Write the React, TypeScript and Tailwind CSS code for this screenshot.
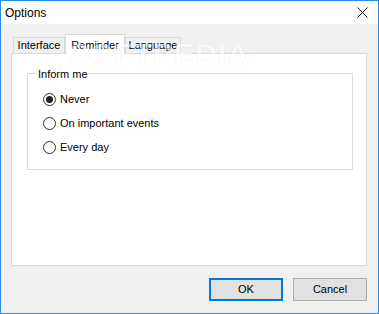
import React from "react";

const font = "font-['Liberation_Sans',Arial,sans-serif]";

function Radio({ label, checked }: { label: string; checked?: boolean }) {
  return (
    <div className="flex h-[24px] items-center">
      <span className="flex h-[13px] w-[13px] items-center justify-center rounded-full border border-[#333333] bg-white">
        {checked && <span className="h-[7px] w-[7px] rounded-full bg-[#222222]" />}
      </span>
      <span className="ml-[4px] text-[11px] text-black">{label}</span>
    </div>
  );
}

export default function App() {
  const tabs = [
    { name: "Interface", w: "w-[52px]" },
    { name: "Reminder", w: "w-[60px]", active: true },
    { name: "Language", w: "w-[56px]" },
  ];

  return (
    <div className={`${font} flex h-[314px] w-[379px] flex-col border border-[#2b8be8] bg-[#f0f0f0]`}>
      {/* title bar */}
      <div className="flex h-[23px] shrink-0 items-center justify-between bg-white pl-[4px] pr-[10px]">
        <span className="text-[12px] text-black">Options</span>
        <svg width="11" height="11" viewBox="0 0 11 11">
          <path d="M0.5 0.5 L10.5 10.5 M10.5 0.5 L0.5 10.5" stroke="#111" strokeWidth="1" fill="none" />
        </svg>
      </div>

      <div className="relative flex flex-1 flex-col pl-[10px] pr-[11px] pt-[10px]">
        <div className="pointer-events-none absolute left-[68px] top-[13px] z-20 text-[30px] font-bold leading-[34px] tracking-[1px] text-white opacity-50 [text-shadow:0_0_1px_rgba(0,0,0,0.2)]">
          SOFTPEDIA<span className="align-top text-[9px]">®</span>
        </div>

        {/* tabs */}
        <div className="flex h-[19px] items-end pl-[2px]">
          {tabs.map((t) =>
            t.active ? (
              <div
                key={t.name}
                className={`${t.w} relative z-10 -mb-px flex h-[20px] items-start justify-center border border-b-0 border-[#d9d9d9] bg-white pt-[2px] text-[11px] text-black`}
              >
                {t.name}
              </div>
            ) : (
              <div
                key={t.name}
                className={`${t.w} flex h-[16px] items-center justify-center border border-b-0 border-[#d9d9d9] bg-[#f0f0f0] text-[11px] text-black`}
              >
                {t.name}
              </div>
            )
          )}
        </div>

        {/* panel */}
        <div className="h-[213px] border border-[#d9d9d9] bg-white pl-[15px] pr-[13px] pt-[19px]">
          <div className="relative h-[97px] border border-[#dcdcdc] pl-[15px] pt-[13px]">
            <span className="absolute -top-[8px] left-[9px] z-30 bg-white px-[1px] text-[11px] text-black">
              Inform me
            </span>
            <Radio label="Never" checked />
            <Radio label="On important events" />
            <Radio label="Every day" />
          </div>
        </div>

        {/* buttons */}
        <div className="mt-[12px] flex justify-end gap-[10px]">
          <button className="h-[23px] w-[74px] border-2 border-[#0078d7] bg-[#e1e1e1] text-[11px] text-black">
            OK
          </button>
          <button className="h-[23px] w-[74px] border border-[#adadad] bg-[#e1e1e1] text-[11px] text-black">
            Cancel
          </button>
        </div>
      </div>
    </div>
  );
}
